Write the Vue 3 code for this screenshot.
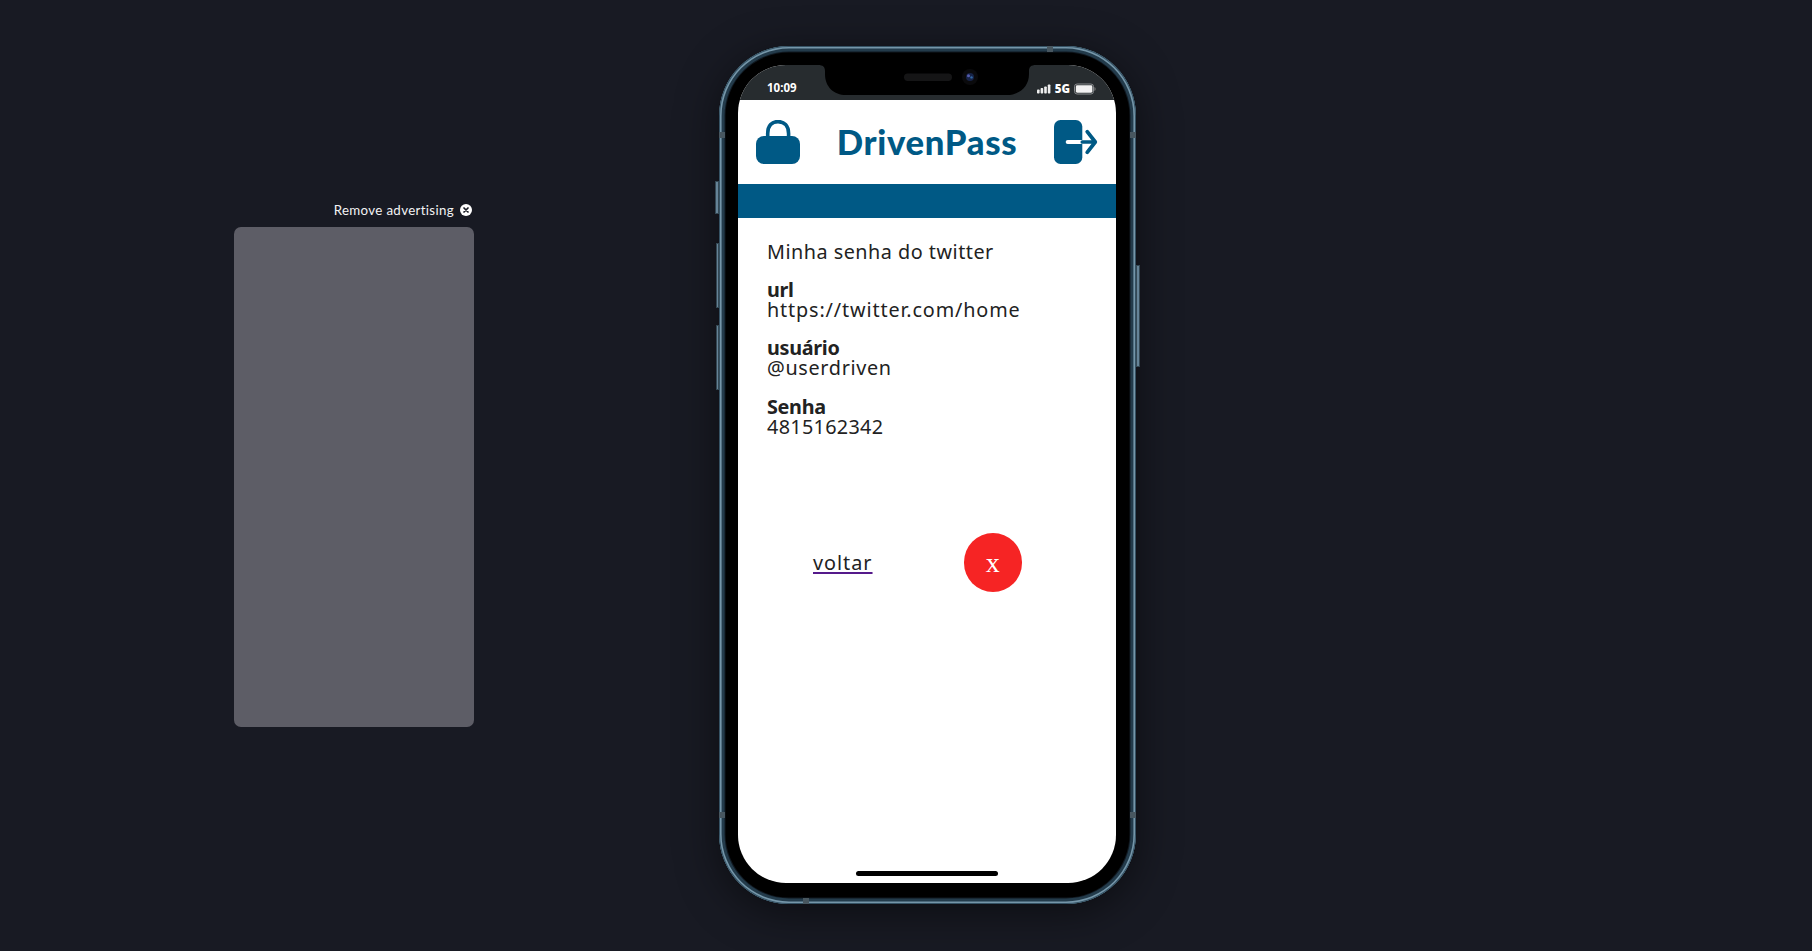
<script setup>
const fields = [
  { label: 'url', value: 'https://twitter.com/home', spacing: '0.86px' },
  { label: 'usuário', value: '@userdriven', spacing: '0.68px' },
  { label: 'Senha', value: '4815162342', spacing: '0.32px' },
]
</script>

<template>
  <main class="stage">
    <aside class="ad">
      <div class="ad-remove">
        <span>Remove advertising</span>
        <svg width="12" height="12" viewBox="0 0 12 12"><circle cx="6" cy="6" r="6" fill="#fff" /><path d="M4 4l4 4M8 4l-4 4" stroke="#181a23" stroke-width="1.7" stroke-linecap="round" /></svg>
      </div>
      <div class="ad-box"></div>
    </aside>

    <section class="phone">
      <i class="button mute"></i><i class="button up"></i><i class="button down"></i><i class="button power"></i>
      <i class="band b1"></i><i class="band b2"></i><i class="band b3"></i><i class="band b4"></i><i class="band b5"></i><i class="band b6"></i>
      <div class="screen">
        <div class="status">
          <span class="time">10:09</span>
          <div class="signal">
            <svg width="14" height="10" viewBox="0 0 14 10" fill="#eee"><rect x="0" y="5.5" width="2.6" height="4" rx=".8" /><rect x="3.6" y="4" width="2.6" height="5.5" rx=".8" /><rect x="7.2" y="2.4" width="2.6" height="7.1" rx=".8" /><rect x="10.8" y=".5" width="2.6" height="9" rx=".8" /></svg>
            <b>5G</b>
            <svg class="battery" width="22" height="12" viewBox="0 0 22 12"><rect x=".5" y="1" width="19" height="10" rx="2.6" fill="none" stroke="#888b8e" /><rect x="1.8" y="2.3" width="16.6" height="7.4" rx="1.4" fill="#f1f1f1" /><path d="M20.4 4v4q1.3-.5 1.3-2t-1.3-2" fill="#777" /></svg>
          </div>
          <svg class="notch" width="218" height="31" viewBox="0 0 218 31"><path d="M0 0C5 0 7 2 7 6V9C7 22 16 30 28 30H189C201 30 211 22 211 9V6C211 2 213 0 218 0Z" /><rect x="86" y="8.5" width="48" height="7.5" rx="3.7" fill="#151516" /><circle cx="152" cy="12" r="8" fill="#0a0a0c" /><circle cx="152" cy="12" r="4" fill="#172347" /><circle cx="150.5" cy="10.8" r="1.5" fill="#555cae" /><circle cx="153.5" cy="12.4" r="1.2" fill="#3269a4" /></svg>
        </div>
        <header class="header">
          <svg width="44" height="44" viewBox="0 0 44 44"><path d="M11.7 18V13.5C11.7 5.5 16 1.6 22 1.6S32.6 5.5 32.6 13.5V18" fill="none" stroke="#005985" stroke-width="3.6" /><rect y="16" width="44" height="28" rx="8" fill="#005985" /></svg>
          <h1>DrivenPass</h1>
          <svg width="44" height="44" viewBox="0 0 44 44"><rect width="28.3" height="44" rx="6.5" fill="#005985" /><path d="M13.7 22H28.3" stroke="#fff" stroke-width="4" stroke-linecap="round" /><path d="M28.3 22H41M33.2 11.7L41.3 22L33.2 32.4" fill="none" stroke="#005985" stroke-width="3.7" stroke-linecap="round" stroke-linejoin="round" /></svg>
        </header>
        <div class="bar"></div>
        <div class="content">
          <p class="title">Minha senha do twitter</p>
          <dl v-for="f in fields" :key="f.label">
            <dt>{{ f.label }}</dt>
            <dd :style="{ letterSpacing: f.spacing }">{{ f.value }}</dd>
          </dl>
        </div>
        <div class="actions">
          <a class="back">voltar</a>
          <button class="delete">x</button>
        </div>
        <div class="home"></div>
      </div>
    </section>
  </main>
</template>

<style>
body { background: #181a23; overflow: hidden; }
</style>
<style scoped>
* { box-sizing: border-box; margin: 0; }
.stage { display: flex; align-items: flex-start; width: 1812px; height: 951px; background: #181a23; }
.ad { width: 240px; margin: 202px 0 0 234px; }
.ad-remove { height: 25px; display: flex; align-items: flex-start; justify-content: flex-end; gap: 6px; padding-right: 2px; font: 13.3px/17px Lato, sans-serif; letter-spacing: .34px; color: #f2f2f3; }
.ad-remove svg { margin-top: 2px; }
.ad-box { height: 500px; border-radius: 7px; background: #5d5d66; }
.phone {
  position: relative; width: 417px; height: 858px; margin: 46px 0 0 245px; padding: 19px 20px 21px 19px; border-radius: 70px; background: #000;
  box-shadow: inset 0 0 0 1px #355264, inset 0 0 0 2.6px #7596a9, inset 0 0 0 5.5px #233b4b, inset 0 0 0 6.5px #101820, 0 8px 40px rgba(0,0,0,.5);
}
.screen { display: flex; flex-direction: column; width: 378px; height: 818px; border-radius: 48px; background: #fff; overflow: hidden; }
.status { position: relative; flex: none; display: flex; justify-content: space-between; height: 35px; background: #272c2f; padding: 14px 20px 0 29px; color: #fff; font: bold 11.5px/17px "Noto Sans", sans-serif; }
.signal { display: flex; align-items: flex-start; gap: 4px; }
.signal svg { margin-top: 4.5px; }
.signal .battery { margin-top: 4px; }
.signal b { font-size: 11.5px; line-height: 19px; }
.notch { position: absolute; left: 80px; top: 0; }
.header { flex: none; height: 84px; padding: 0 18px; display: flex; align-items: center; justify-content: space-between; }
h1 { font: 900 34.7px/44px Lato, sans-serif; letter-spacing: .7px; color: #005985; white-space: nowrap; }
.bar { flex: none; height: 34px; background: #005985; }
.content { height: 262px; padding: 21.5px 29px 0 29px; font: 19.8px/20px "Noto Sans", sans-serif; color: #222; white-space: nowrap; }
.title { letter-spacing: .5px; height: 40.5px; line-height: 23px; }
dl { height: 58.4px; }
dt { font-weight: bold; letter-spacing: -.3px; }
.actions { height: 160px; display: flex; align-items: center; padding: 5px 94px 0 75px; justify-content: space-between; }
.back { font: 19.8px/24px "Noto Sans", sans-serif; letter-spacing: 1px; color: #222; text-decoration: underline #551a8b 2px; text-underline-offset: 2px; text-decoration-skip-ink: none; }
.delete { width: 58.5px; height: 58.5px; border: 0; border-radius: 50%; background: #f62424; color: #fff; padding: 0; font: 28px/30px "Liberation Serif", serif; }
.home { flex: none; width: 142px; height: 5px; border-radius: 3px; background: #000; margin: auto auto 7px 118px; }
.button { position: absolute; background: #658397; border: 1px solid #344854; }
.mute { left: -4px; top: 135px; width: 4px; height: 33px; }
.up { left: -3px; top: 197px; width: 3px; height: 65px; }
.down { left: -3px; top: 279px; width: 3px; height: 65px; }
.power { right: -4px; top: 219px; width: 4px; height: 102px; }
.band { position: absolute; width: 6px; height: 6px; background: #485760; }
.b1 { left: 0; top: 86px; } .b2 { right: 0; top: 86px; } .b3 { left: 0; top: 766px; } .b4 { right: 0; top: 766px; } .b5 { left: 328px; top: 0; } .b6 { left: 84px; bottom: 0; }
</style>
